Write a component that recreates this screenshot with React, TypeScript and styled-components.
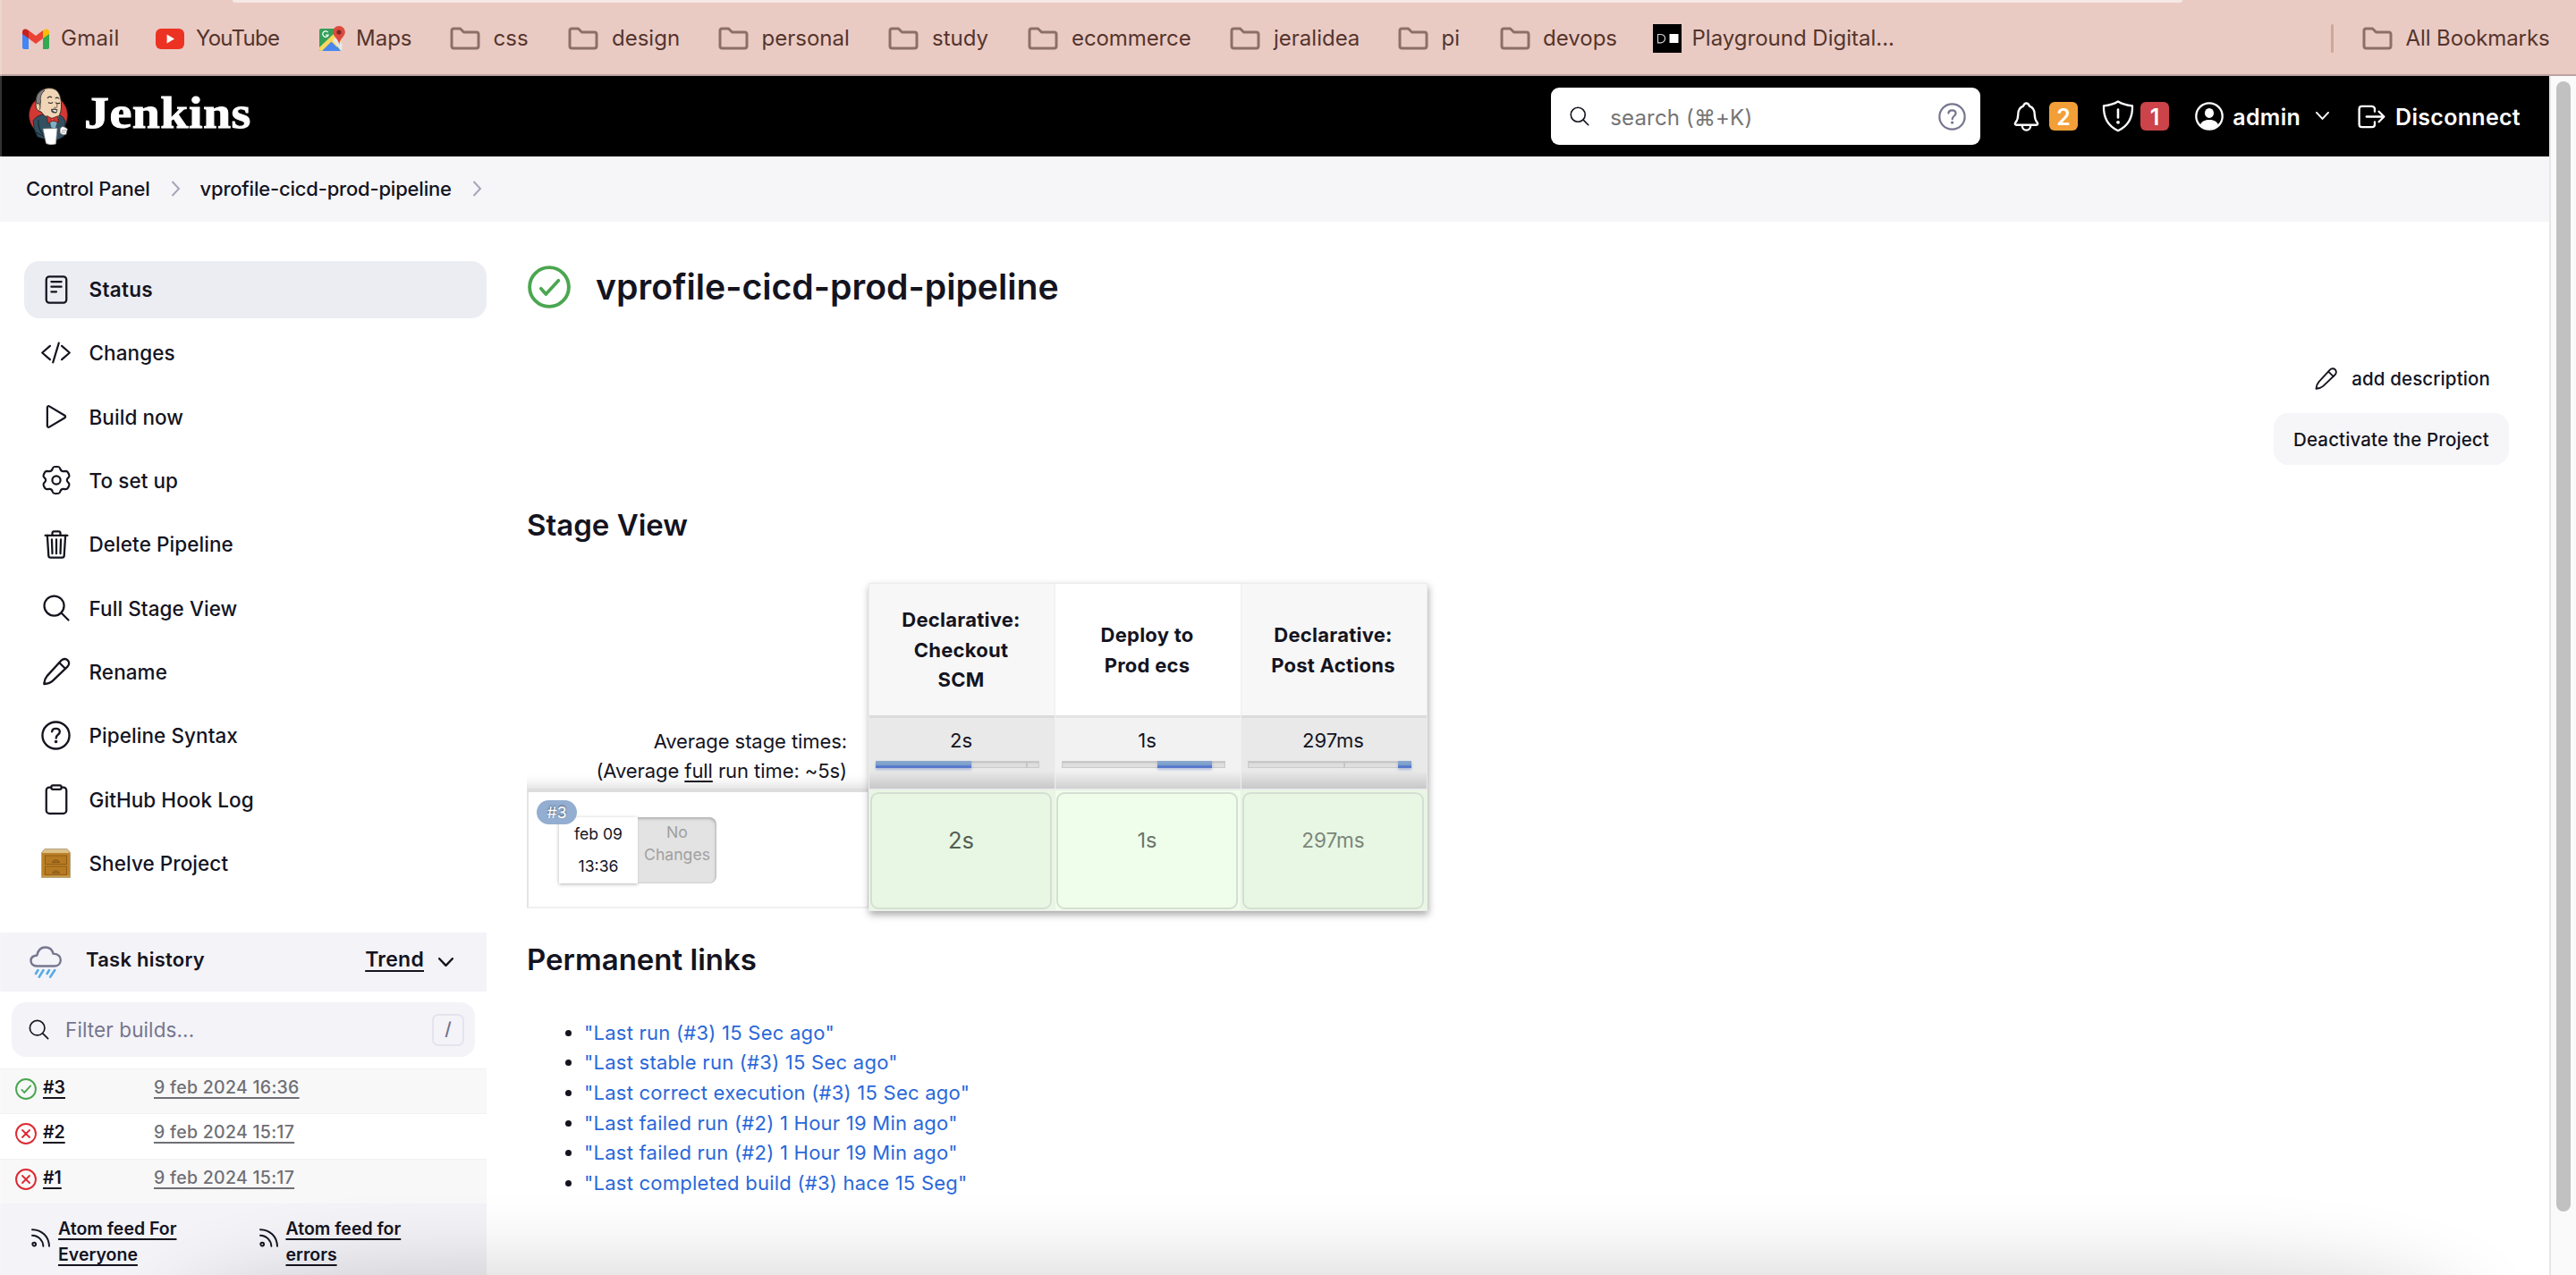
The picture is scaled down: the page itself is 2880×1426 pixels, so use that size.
import React from "react";
import styled, { createGlobalStyle, css } from "styled-components";
import {
  IoReaderOutline,
  IoCodeSlashOutline,
  IoPlayOutline,
  IoTrashOutline,
  IoSearchOutline,
  IoClipboardOutline,
  IoNotificationsOutline,
  IoLogOutOutline,
} from "react-icons/io5";

const INK = "#14141f";

const GlobalStyle = createGlobalStyle`
  * { box-sizing: border-box; }
  body {
    margin: 0;
    background: #fff;
    color: ${INK};
    font-family: Inter, "Liberation Sans", sans-serif;
    font-size: 22px;
    overflow: hidden;
  }
  svg { display: block; flex: none; }
  a { color: inherit; text-decoration: none; }
`;

const Window = styled.div`
  position: relative;
  display: flex;
  flex-direction: column;
  width: 2880px;
  height: 1426px;
  overflow: hidden;
`;

const WindowShade = styled.div`
  position: absolute;
  inset: 0;
  overflow: hidden;
  pointer-events: none;
  box-shadow: inset 2px 0 rgba(255, 255, 255, 0.2);

  &::after {
    content: "";
    position: absolute;
    left: 190px;
    right: 120px;
    bottom: -66px;
    height: 60px;
    border-radius: 320px 320px 0 0 / 60px 60px 0 0;
    box-shadow: 0 0 90px 10px rgba(0, 0, 0, 0.19);
  }
`;

/* ---------- Bookmarks bar ---------- */

const BookmarksBar = styled.nav`
  display: flex;
  flex-direction: column;
  height: 85px;
  background: #eacbc4;
  border-bottom: 2px solid #bba39e;
  color: #55352d;
`;

const OmniboxEdge = styled.div`
  height: 3px;
  width: 2180px;
  margin-left: 260px;
  background: #f6e8e5;
  border-radius: 0 0 10px 10px;
`;

const BookmarksRow = styled.div`
  flex: 1;
  display: flex;
  align-items: center;
  padding-left: 25px;
`;

const Bookmark = styled.a<{ $width: number; $gap: number; $tracking?: number }>`
  display: flex;
  align-items: center;
  width: ${(p) => p.$width}px;
  gap: ${(p) => p.$gap}px;
  font-size: 24px;
  letter-spacing: ${(p) => p.$tracking ?? 0}px;
  line-height: 32px;
  white-space: nowrap;
`;

const BarDivider = styled.span`
  width: 3px;
  height: 32px;
  margin-left: auto;
  margin-right: 32px;
  border-radius: 2px;
  background: #cfa697;
`;

/* ---------- Page frame ---------- */

const Viewport = styled.div`
  flex: 1;
  display: flex;
  min-height: 0;
`;

const Site = styled.div`
  width: 2850px;
  display: flex;
  flex-direction: column;
`;

const ScrollTrack = styled.div`
  width: 30px;
  padding: 6px 6px 0 6px;
  background: #fafafa;
  border-left: 2px solid #e7e7e7;
`;

const ScrollThumb = styled.div`
  width: 16px;
  height: 1264px;
  border-radius: 8px;
  background: #c1c1c1;
`;

/* ---------- Header ---------- */

const Header = styled.header`
  height: 90px;
  flex: none;
  display: flex;
  align-items: center;
  padding: 0 32px;
  background: #000;
  color: #fff;
`;

const Brand = styled.a`
  display: flex;
  align-items: center;
  gap: 17px;
`;

const BrandName = styled.span`
  font: 700 50px/60px "Liberation Serif", serif;
  width: 190px;
  letter-spacing: 0.4px;
  transform: scaleX(1.12);
  transform-origin: left center;
  -webkit-text-stroke: 0.9px #fff;
  margin-top: -8px;
`;

const SearchBox = styled.div`
  display: flex;
  align-items: center;
  width: 480px;
  height: 64px;
  margin-left: auto;
  padding: 0 16px 0 19px;
  border-radius: 9px;
  background: #fff;
  color: ${INK};
`;

const SearchHint = styled.span`
  flex: 1;
  margin: 2px 0 0 21px;
  font-size: 24px;
  letter-spacing: 0.15px;
  color: #757575;
`;

const HeaderAction = styled.a<{ $ml: number; $gap: number }>`
  display: flex;
  align-items: center;
  margin-left: ${(p) => p.$ml}px;
  gap: ${(p) => p.$gap}px;
  font-size: 25px;
  font-weight: 600;
  letter-spacing: 0.3px;
  white-space: nowrap;
`;

const HeaderLabel = styled.span`
  margin-top: 2px;
`;

const MenuArrow = styled.span`
  margin-left: 7px;
`;

const Badge = styled.span<{ $color: string }>`
  width: 32px;
  height: 32px;
  border-radius: 6px;
  background: ${(p) => p.$color};
  font-size: 25px;
  line-height: 34px;
  text-align: center;
`;

/* ---------- Breadcrumbs ---------- */

const Breadcrumbs = styled.nav`
  height: 73px;
  flex: none;
  display: flex;
  align-items: center;
  padding: 0 0 1px 29px;
  background: #f6f6f8;
  font-weight: 500;
  letter-spacing: -0.2px;
`;

const CrumbArrow = styled.svg`
  width: 11px;
  height: 18px;
  margin: 0 22px 0 23px;
  fill: none;
  stroke: #a6a6b8;
  stroke-width: 2;
`;

const Body = styled.div`
  flex: 1;
  display: flex;
  min-height: 0;
`;

/* ---------- Sidebar ---------- */

const Sidebar = styled.aside`
  width: 544px;
  flex: none;
  display: flex;
  flex-direction: column;
`;

const Tasks = styled.nav`
  height: 795px;
  flex: none;
  display: flex;
  flex-direction: column;
  gap: 7.33px;
  padding: 44px 0 0 27px;
`;

const Task = styled.a<{ $active?: boolean }>`
  display: flex;
  align-items: center;
  height: 64px;
  gap: 19px;
  padding: 0 0 1px 17.5px;
  border-radius: 17px;
  font-size: 22.5px;
  font-weight: 500;
  letter-spacing: 0.07px;
  ${(p) =>
    p.$active &&
    css`
      background: #ecedf3;
      font-weight: 600;
      letter-spacing: 0.3px;
    `}
`;

const TaskIcon = styled.span`
  display: flex;
  justify-content: center;
  width: 36px;
`;

const HistoryHeader = styled.div`
  display: flex;
  align-items: center;
  height: 66px;
  padding: 0 37px 0 33px;
  background: #f3f3f8;
  font-weight: 600;
  letter-spacing: 0.25px;
`;

const HistoryTitle = styled.span`
  flex: 1;
  margin-left: 26px;
  margin-top: -6px;
`;

const Trend = styled.a`
  margin: -6px 16px 0 0;
  font-size: 23px;
  text-decoration: underline;
  text-decoration-thickness: 2px;
  text-underline-offset: 4px;
`;

const Filter = styled.div`
  display: flex;
  align-items: center;
  height: 61px;
  margin: 12px 13px 13px;
  padding: 0 12px 0 17px;
  border-radius: 16px;
  background: #f3f3f8;
`;

const FilterHint = styled.span`
  flex: 1;
  margin-left: 16px;
  font-size: 22.5px;
  letter-spacing: 0.1px;
  color: #76768f;
`;

const Key = styled.kbd`
  width: 36px;
  height: 36px;
  border: 2px solid #e4e4ee;
  border-radius: 7px;
  font: 500 20px/31px Inter, sans-serif;
  text-align: center;
  color: #6f6f88;
`;

const BuildRow = styled.div<{ $striped?: boolean }>`
  display: flex;
  align-items: flex-start;
  height: 50.4px;
  padding-left: 17px;
  border-top: 1px solid #f1f1f3;
  background: ${(p) => (p.$striped ? "#f8f8f8" : "#fff")};
`;

const BuildIcon = styled.span`
  margin-top: 10px;
`;

const BuildNumber = styled.a`
  width: 124px;
  margin: 8px 0 0 7px;
  font-size: 19.5px;
  font-weight: 600;
  line-height: 24px;
  text-decoration: underline;
  text-decoration-thickness: 1.5px;
  text-underline-offset: 4px;
`;

const BuildDate = styled(BuildNumber)`
  width: auto;
  margin-left: 0;
  font-weight: 500;
  letter-spacing: 0.28px;
  color: #6f6f76;
`;

const Feeds = styled.div`
  flex: 1;
  display: flex;
  padding: 14px 0 0 35px;
  background: #f3f3f8;
`;

const Feed = styled.a`
  display: flex;
  align-items: flex-start;
  gap: 9px;
  width: 256px;

  svg {
    margin-top: 14px;
  }
`;

const FeedLabel = styled.span`
  width: 150px;
  font-size: 19.5px;
  font-weight: 600;
  line-height: 29px;
  text-decoration: underline;
  text-decoration-thickness: 1.5px;
  text-underline-offset: 4px;
`;

/* ---------- Main ---------- */

const Main = styled.main`
  flex: 1;
  display: flex;
  flex-direction: column;
  padding: 49px 45px 0;
`;

const TitleRow = styled.div`
  display: flex;
  align-items: center;
  gap: 28px;
  height: 48px;
  padding-left: 1px;
`;

const Title = styled.h1`
  margin: 0;
  font-size: 39.2px;
  font-weight: 600;
  line-height: 48px;
`;

const Actions = styled.div`
  display: flex;
  flex-direction: column;
  align-items: flex-end;
  gap: 24px;
  margin-top: 63px;
  font-size: 20.5px;
  font-weight: 500;
  letter-spacing: 0.12px;
`;

const AddDescription = styled.a`
  display: flex;
  align-items: center;
  gap: 14px;
  height: 30px;
  margin-right: 21px;
`;

const SoftButton = styled.button`
  height: 57.5px;
  width: 263px;
  padding: 2px 0 0;
  border: 0;
  border-radius: 16px;
  background: #f6f6f9;
  color: inherit;
  font: inherit;
  letter-spacing: inherit;
`;

const Heading = styled.h2<{ $mt: number }>`
  margin: ${(p) => p.$mt}px 0 0;
  font-size: 33px;
  font-weight: 600;
  line-height: 40px;
`;

/* ---------- Stage view ---------- */

const StageView = styled.section`
  display: flex;
  height: 367px;
  margin-top: 45px;
`;

const RunsColumn = styled.div`
  width: 382px;
  padding-top: 151px;
`;

const AverageLabels = styled.div`
  height: 79px;
  padding: 10px 24px 0 0;
  font-size: 22px;
  line-height: 33.4px;
  text-align: right;
  letter-spacing: -0.08px;
  background: linear-gradient(to top, #e6e6e6, #f8f8f8 9px, #fff 16px);

  u {
    text-decoration-thickness: 2px;
    text-underline-offset: 3px;
  }
`;

const Run = styled.div`
  height: 134px;
  padding: 9px 0 0 9px;
  border: solid #e4e4e4;
  border-width: 4px 1px 2px 2px;
  border-top-color: #dedede;
  border-bottom-color: #f0f0f0;
`;

const RunBadge = styled.span`
  position: relative;
  z-index: 1;
  display: block;
  width: 45px;
  height: 27px;
  border-radius: 14px;
  background: #93aed0;
  color: #fff;
  font-size: 17.5px;
  line-height: 27px;
  text-align: center;
  text-shadow: 0 -1px 2px rgba(0, 0, 0, 0.5);
`;

const RunCard = styled.div`
  display: flex;
  height: 74px;
  width: 176px;
  margin: -8px 0 0 25px;
  font-size: 17.6px;
  text-align: center;
`;

const RunDate = styled.div`
  width: 88px;
  padding-top: 1px;
  line-height: 36.3px;
  background: #fff;
  box-shadow: 0 1px 4px rgba(0, 0, 0, 0.3);
`;

const RunChanges = styled.div`
  width: 88px;
  padding-top: 4px;
  line-height: 25px;
  color: #a0a0a0;
  background: #e3e3e3;
  border-radius: 0 8px 8px 0;
  box-shadow: inset -1px 2px 3px rgba(0, 0, 0, 0.22), inset 0 -1px 1px rgba(0, 0, 0, 0.08);
`;

const StageTable = styled.div`
  display: flex;
  width: 625px;
  border: 1px solid #ececec;
  box-shadow: 1px 4px 8px rgba(0, 0, 0, 0.34);
`;

const StageColumn = styled.div<{ $shaded?: boolean }>`
  flex: 1;
  display: flex;
  flex-direction: column;
  background: ${(p) => (p.$shaded ? "#f7f7f7" : "#fff")};
  border-right: 1px solid #efefef;

  &:last-child {
    border-right: 0;
  }
`;

const StageName = styled.div`
  display: flex;
  align-items: center;
  justify-content: center;
  height: 150px;
  padding: 3px 27px 0 25px;
  border-bottom: 3px solid rgba(0, 0, 0, 0.11);
  font-weight: 700;
  line-height: 33.6px;
  letter-spacing: 0.25px;
  text-align: center;
`;

const StageAverage = styled.div<{ $shaded?: boolean }>`
  height: 79px;
  padding: 10px 17px 0 7px;
  line-height: 30px;
  text-align: center;
  background: ${(p) => (p.$shaded ? "#e9e9e9" : "#f2f2f2")}
    linear-gradient(to top, rgba(0, 0, 0, 0.14), transparent 20px);

  span {
    margin-left: 8px;
  }
`;

const Meter = styled.div`
  display: flex;
  width: 183px;
  height: 8px;
  margin-top: 8px;
  background: #dedede;
  box-shadow: inset 0 0 0 1px #cbcbcb, inset 0 2px 2px rgba(0, 0, 0, 0.16);
`;

const MeterFill = styled.i`
  background: linear-gradient(#8aa8cd, #7ba0cc 55%, #5273c9 75%, #5b7ccd);
  box-shadow: 0 2px 3px rgba(70, 100, 180, 0.35);
`;

const MeterTick = styled.i`
  width: 2px;
  background: #c6c6c6;
`;

const StageResult = styled.div<{ $shaded?: boolean; $color: string; $size: number }>`
  flex: 1;
  display: flex;
  padding: 2px 3px 1px 1px;
  background: ${(p) => (p.$shaded ? "#e8f7e3" : "#effeea")};
  border-top: 2px solid #ececec;

  div {
    flex: 1;
    padding-top: 32px;
    border: 2px solid #d5ded3;
    border-radius: 9px;
    color: ${(p) => p.$color};
    font-size: ${(p) => p.$size}px;
    line-height: 40px;
    text-align: center;
  }
`;

const LinkList = styled.ul`
  margin: 46px 0 0;
  padding-left: 64px;
  line-height: 33.7px;
  letter-spacing: 0.25px;

  li {
    height: 33.7px;
  }

  a {
    color: #2a68d9;
  }
`;

/* ---------- Drawings ---------- */

const FolderIcon = () => (
  <svg width="34" height="26" viewBox="0 0 34 26" fill="none" stroke="#8b7068" strokeWidth="3" strokeLinejoin="round">
    <path d="M2 4.5Q2 2 4.5 2H11.5L15.5 6H29.5Q32 6 32 8.5V21.5Q32 24 29.5 24H4.5Q2 24 2 21.5Z" />
  </svg>
);

const GmailIcon = () => (
  <svg width="30" height="23" viewBox="0 0 30 23">
    <path d="M0 4.5L7 9.5V23H2Q0 23 0 21Z" fill="#4285f4" />
    <path d="M30 4.5L23 9.5V23H28Q30 23 30 21Z" fill="#34a853" />
    <path d="M23 2L26 0.5Q30 0 30 4V6L23 11Z" fill="#fbbc04" />
    <path d="M7 2L4 0.5Q0 0 0 4V6L7 11Z" fill="#c5221f" />
    <path d="M7 2L15 8L23 2V11L15 17L7 11Z" fill="#ea4335" />
  </svg>
);

const YouTubeIcon = () => (
  <svg width="32" height="23" viewBox="0 0 32 23">
    <rect width="32" height="23" rx="6" fill="#ec3323" />
    <path d="M12.6 6.6L21 11.5L12.6 16.4Z" fill="#fff" />
  </svg>
);

const MapsIcon = () => (
  <svg width="29" height="29" viewBox="0 0 29 29">
    <path d="M2 3H25V28H2Q0 28 0 26V5Q0 3 2 3Z" fill="#34a059" />
    <path d="M0 24L17 8L25 14V21L11 28H2Q0 28 0 26Z" fill="#fbd75b" />
    <path d="M3 28L13.5 17.5L24 28Z" fill="#4a86ee" />
    <path d="M15 16L19 12L25.5 20V26Q25.5 28 24 28Z" fill="#e6e6e6" />
    <path d="M22 0A6.8 6.8 0 0 1 28.8 7C28.8 12 22.8 14 22.2 21C21.4 14 15.2 12 15.2 7A6.8 6.8 0 0 1 22 0Z" fill="#dd4b3e" />
    <circle cx="22" cy="7" r="2.6" fill="#7d2620" />
    <path d="M9.6 7.2A3.2 3.2 0 1 0 10 10.2H7.2" fill="none" stroke="#fff" strokeWidth="1.3" />
  </svg>
);

const PlaygroundIcon = () => (
  <svg width="32" height="32" viewBox="0 0 32 32">
    <rect width="32" height="32" fill="#000" />
    <path d="M5.5 11.5H9Q13.5 12 13.5 16T9 20.8H5.5Z" fill="none" stroke="#cfcfcf" strokeWidth="1.2" />
    <rect x="18.5" y="11" width="10" height="10" fill="#fff" />
  </svg>
);

const ButlerLogo = () => (
  <svg width="45" height="64" viewBox="0 0 45 64">
    <ellipse cx="22" cy="31" rx="21.5" ry="22.5" fill="#d33833" stroke="#5d1d1b" strokeWidth="0.8" />
    <path d="M5 37Q10 30 19 30L34 30Q40 33 41 38L40 54Q32 60 24 59L10 55Q5 46 5 37Z" fill="#335061" stroke="#1a2a34" strokeWidth="0.9" />
    <path d="M20 30L29 50L34 30Z" fill="#f5f5f5" />
    <path d="M23 36H33L30 46L25 45Z" fill="#81b0c4" stroke="#1a2a34" strokeWidth="0.6" />
    <path d="M11 36Q10 46 16 52M8 50L18 55" fill="none" stroke="#172730" strokeWidth="1.1" />
    <path d="M8 16Q8 5 17 1.5Q28 -1.5 33 5Q37 11 36.5 22Q36 33 29 35Q19 35 14 27Q8 26 8 19Z" fill="#f0d6b7" stroke="#2c2420" strokeWidth="0.9" />
    <path d="M8.5 17Q7 7 16 2L18 3Q12 8 13.5 16L12.5 22Q11 17 8.5 17Z" fill="#7d8083" stroke="#2c2420" strokeWidth="0.7" />
    <path d="M9 18Q13 16.5 13 22Q13 25 11.5 25.5" fill="#e8c5a0" stroke="#2c2420" strokeWidth="0.8" />
    <path d="M21 12Q23 9 26 11M30 12Q32 10 34 12.5" fill="none" stroke="#3a2e28" strokeWidth="1.2" />
    <path d="M22 16.5Q24.5 18.5 27 16.5M31 17Q33 18.5 35 17" fill="none" stroke="#2c2420" strokeWidth="1.2" />
    <path d="M29.5 16Q33.5 20 31 22.5L28.5 22.2" fill="none" stroke="#6b4a38" strokeWidth="0.9" />
    <path d="M25 24Q29 22.6 32.5 24.5L31.5 28Q28 29.5 25.5 27Z" fill="#47423f" />
    <path d="M26.5 25.2Q29 24.6 31.3 25.6L31 26.8Q28.5 27.4 26.5 25.2Z" fill="#fff" />
    <path d="M20.5 31.5L26 34.5L32.5 31.8L33.5 39L27 37L21.5 40Z" fill="#d33833" stroke="#5d1d1b" strokeWidth="0.8" />
    <circle cx="26.7" cy="35.7" r="1.8" fill="#ef4a44" stroke="#5d1d1b" strokeWidth="0.6" />
    <path d="M16 46L32 45.5L31 56L30.5 63Q24 65 19.5 62.5Z" fill="#fff" stroke="#8a8a8a" strokeWidth="0.7" />
    <path d="M35 46Q37 42 41 44.5L43.5 46L42 52.5Q38 54 35 51Z" fill="#fff" stroke="#4c4c4c" strokeWidth="0.8" />
    <path d="M37 48L42 47.6M36.6 50.2L41 50" stroke="#777" strokeWidth="0.7" />
  </svg>
);

const HelpIcon = ({ size, color }: { size: number; color: string }) => (
  <svg width={size} height={size} viewBox="0 0 32 32" fill="none" stroke={color} strokeWidth="2.3" strokeLinecap="round">
    <circle cx="16" cy="16" r="14.6" />
    <path d="M11.8 11.9C12 9.6 13.8 8.6 16 8.6C18.4 8.6 20.2 10 20.2 12.1C20.2 15.2 16.2 15.3 16.2 18.8" />
    <circle cx="16.1" cy="22.8" r="1.7" fill={color} stroke="none" />
  </svg>
);

const GearIcon = () => (
  <svg width="36" height="36" viewBox="0 0 36 36" fill="none" stroke={INK} strokeWidth="2.2" strokeLinejoin="round">
    <path d="M13.8 5Q14.4 3 16.2 3H19.8Q21.6 3 22.2 5Q22.8 7.8 25.2 8.2Q26 8.3 28.2 7.9Q30 7.8 31 9.4L32.2 11.8Q33 13.8 31.5 15.2Q29.8 16.6 29.8 18Q29.8 19.4 31.5 20.8Q33 22.2 32.2 24.2L31 26.6Q30 28.2 28.2 28.1Q26 27.7 25.2 27.8Q22.8 28.2 22.2 31Q21.6 33 19.8 33H16.2Q14.4 33 13.8 31Q13.2 28.2 10.8 27.8Q10 27.7 7.8 28.1Q6 28.2 5 26.6L3.8 24.2Q3 22.2 4.5 20.8Q6.2 19.4 6.2 18Q6.2 16.6 4.5 15.2Q3 13.8 3.8 11.8L5 9.4Q6 7.8 7.8 7.9Q10 8.3 10.8 8.2Q13.2 7.8 13.8 5Z" />
    <circle cx="18" cy="18" r="4.6" />
  </svg>
);

const PencilIcon = ({ size }: { size: number }) => (
  <svg width={size} height={size} viewBox="0 0 36 36" fill="none" stroke={INK} strokeWidth="2.3" strokeLinecap="round" strokeLinejoin="round">
    <path d="M4.3 32C4.6 27.6 5.4 25.6 8 22.6L23.4 5.8C25.4 3.6 28.6 3.4 30.6 5.3C32.7 7.3 32.6 10.6 30.4 12.7L14 28.4C11.2 31 8.8 31.6 4.3 32Z" />
    <path d="M21.4 8.2L28 14.8" />
  </svg>
);

const ChevronIcon = ({ width, stroke }: { width: number; stroke: number }) => (
  <svg width={width} height={width * 0.62} viewBox={`0 0 ${width} ${width * 0.62}`} fill="none" stroke="currentColor" strokeWidth={stroke} strokeLinecap="round" strokeLinejoin="round">
    <path d={`M${stroke / 2} ${stroke / 2}L${width / 2} ${width * 0.62 - stroke / 2 - 0.4}L${width - stroke / 2} ${stroke / 2}`} />
  </svg>
);

const ShieldIcon = () => (
  <svg width="36" height="36" viewBox="0 0 36 36" fill="none" stroke="#fff" strokeWidth="2.3" strokeLinecap="round" strokeLinejoin="round">
    <path d="M18 1.5C14 4 8.5 5.8 2 6.3C1.6 18 5.5 28.5 18 34.2C30.5 28.5 34.4 18 34 6.3C27.5 5.8 22 4 18 1.5Z" />
    <path d="M18 10.5V19.5" strokeWidth="2.6" />
    <circle cx="18" cy="24.8" r="1.9" fill="#fff" stroke="none" />
  </svg>
);

const PersonIcon = () => (
  <svg width="32" height="32" viewBox="0 0 32 32">
    <circle cx="16" cy="16" r="14.7" fill="none" stroke="#fff" strokeWidth="2.3" />
    <ellipse cx="16" cy="12.4" rx="5" ry="5.5" fill="#fff" />
    <path d="M6 25.5C7.5 21.5 11.5 20 16 20C20.5 20 24.5 21.5 26 25.5C23.5 28.6 20 30 16 30C12 30 8.5 28.6 6 25.5Z" fill="#fff" />
  </svg>
);

const StatusIcon = ({ ok, size }: { ok: boolean; size: number }) => (
  <svg
    width={size}
    height={size}
    viewBox="0 0 48 48"
    fill="none"
    stroke={ok ? "#4ba650" : "#dc2a33"}
    strokeLinecap="round"
    strokeLinejoin="round"
  >
    <circle cx="24" cy="24" r="21.9" strokeWidth="3.9" />
    <path d={ok ? "M14.8 25.8L20.3 32L34.4 16.8" : "M16 16L32 32M32 16L16 32"} strokeWidth="3.7" />
  </svg>
);

const RainIcon = () => (
  <svg width="37" height="37" viewBox="0 0 37 37" fill="none" strokeWidth="2.4" strokeLinecap="round" strokeLinejoin="round">
    <path
      stroke="#76768f"
      d="M8 22.5C3.7 22.5 1.5 19.6 1.5 16.6C1.5 13.2 4 10.8 8.3 10.5C9.5 4.5 13 1.5 17.8 1.5C22.5 1.5 25.5 4.5 26.5 8.6C32 9 34.8 12 34.8 15.7C34.8 19.6 31.8 22.5 27.5 22.5Z"
    />
    <path stroke="#55aae6" strokeWidth="2.6" d="M9.5 27L7 31M15.5 27L10.8 34.6M22 27L19.6 31M28.3 27L23.2 34.6" />
  </svg>
);

const CabinetIcon = () => (
  <svg width="33" height="33" viewBox="0 0 33 33">
    <path d="M4 0.5H29L32.5 4.5V32.5H0.5V4.5Z" fill="#bd8227" stroke="#b5a583" strokeWidth="1" />
    <path d="M4 1H29L32 5H1Z" fill="#ddc08a" />
    <path d="M1 30H32V32H1Z" fill="#c79a45" />
    <g fill="#b67a22" stroke="#8f5d17" strokeWidth="1">
      <rect x="4.5" y="8" width="24" height="9.5" />
      <rect x="4.5" y="20" width="24" height="9.5" />
    </g>
    <g fill="#a56d1e" stroke="#85571a" strokeWidth="1">
      <path d="M12.5 15.5Q13 12.8 16.5 12.8T20.5 15.5Z" />
      <path d="M12.5 27.5Q13 24.8 16.5 24.8T20.5 27.5Z" />
    </g>
  </svg>
);

const RssIcon = () => (
  <svg width="21" height="21" viewBox="0 0 21 21" fill="none" stroke={INK} strokeWidth="1.9" strokeLinecap="round">
    <circle cx="3.2" cy="17.6" r="1.9" />
    <path d="M1 7.8C8 8 13 13 13.4 19.8M1 1.2C12 1.4 19.6 9 20 19.8" />
  </svg>
);

const Crumb = () => (
  <CrumbArrow viewBox="0 0 11 18">
    <path d="M1.5 1L9 9L1.5 17" />
  </CrumbArrow>
);

/* ---------- Data ---------- */

const bookmarks = [
  { label: "Gmail", icon: <GmailIcon />, width: 149, gap: 13, tracking: 0.3 },
  { label: "YouTube", icon: <YouTubeIcon />, width: 183, gap: 13, tracking: -0.75 },
  { label: "Maps", icon: <MapsIcon />, width: 145.5, gap: 12, tracking: 0 },
  { label: "css", icon: <FolderIcon />, width: 132.5, gap: 15, tracking: 0 },
  { label: "design", icon: <FolderIcon />, width: 168, gap: 15, tracking: 0 },
  { label: "personal", icon: <FolderIcon />, width: 190, gap: 14.5, tracking: 0 },
  { label: "study", icon: <FolderIcon />, width: 156, gap: 15, tracking: 0 },
  { label: "ecommerce", icon: <FolderIcon />, width: 226, gap: 15, tracking: -0.1 },
  { label: "jeralidea", icon: <FolderIcon />, width: 188, gap: 15, tracking: 0 },
  { label: "pi", icon: <FolderIcon />, width: 114, gap: 14.5, tracking: 0 },
  { label: "devops", icon: <FolderIcon />, width: 171, gap: 14, tracking: 0 },
  { label: "Playground Digital...", icon: <PlaygroundIcon />, width: 290, gap: 11.5, tracking: 0 },
];

const tasks = [
  { label: "Status", icon: <IoReaderOutline size={36} /> },
  { label: "Changes", icon: <IoCodeSlashOutline size={35} /> },
  { label: "Build now", icon: <IoPlayOutline size={36} /> },
  { label: "To set up", icon: <GearIcon /> },
  { label: "Delete Pipeline", icon: <IoTrashOutline size={36} /> },
  { label: "Full Stage View", icon: <IoSearchOutline size={36} /> },
  { label: "Rename", icon: <PencilIcon size={36} /> },
  { label: "Pipeline Syntax", icon: <HelpIcon size={33} color={INK} /> },
  { label: "GitHub Hook Log", icon: <IoClipboardOutline size={36} /> },
  { label: "Shelve Project", icon: <CabinetIcon /> },
];

const builds = [
  { number: "#3", date: "9 feb 2024 16:36", ok: true },
  { number: "#2", date: "9 feb 2024 15:17", ok: false },
  { number: "#1", date: "9 feb 2024 15:17", ok: false },
];

const stages = [
  { name: "Declarative: Checkout SCM", time: "2s", fill: [0, 107], tick: 168, color: "#555e55", size: 25.5 },
  { name: "Deploy to Prod ecs", time: "1s", fill: [107, 61], tick: null, color: "#6c756b", size: 23.5 },
  { name: "Declarative: Post Actions", time: "297ms", fill: [168, 15], tick: 107, color: "#7b867a", size: 22.5 },
];

const links = [
  '"Last run (#3) 15 Sec ago"',
  '"Last stable run (#3) 15 Sec ago"',
  '"Last correct execution (#3) 15 Sec ago"',
  '"Last failed run (#2) 1 Hour 19 Min ago"',
  '"Last failed run (#2) 1 Hour 19 Min ago"',
  '"Last completed build (#3) hace 15 Seg"',
];

/* ---------- Composition ---------- */

const StageMeter = ({ fill, tick }: { fill: number[]; tick: number | null }) => {
  const [start, width] = fill;
  if (tick !== null && tick < start) {
    return (
      <Meter>
        <MeterTick style={{ marginLeft: tick, marginRight: start - tick - 2 }} />
        <MeterFill style={{ width }} />
      </Meter>
    );
  }
  return (
    <Meter>
      <MeterFill style={{ width, marginLeft: start }} />
      {tick !== null && <MeterTick style={{ marginLeft: tick - start - width }} />}
    </Meter>
  );
};

export default function App() {
  return (
    <Window>
      <GlobalStyle />
      <BookmarksBar>
        <OmniboxEdge />
        <BookmarksRow>
          {bookmarks.map((b) => (
            <Bookmark key={b.label} $width={b.width} $gap={b.gap} $tracking={b.tracking}>
              {b.icon}
              {b.label}
            </Bookmark>
          ))}
          <BarDivider />
          <Bookmark $width={239} $gap={14.5} $tracking={-0.1}>
            <FolderIcon />
            All Bookmarks
          </Bookmark>
        </BookmarksRow>
      </BookmarksBar>

      <Viewport>
        <Site>
          <Header>
            <Brand>
              <ButlerLogo />
              <BrandName>Jenkins</BrandName>
            </Brand>
            <SearchBox>
              <IoSearchOutline size={26} />
              <SearchHint>search (⌘+K)</SearchHint>
              <HelpIcon size={31} color="#76768f" />
            </SearchBox>
            <HeaderAction $ml={33} $gap={7}>
              <IoNotificationsOutline size={37} />
              <Badge $color="#f39f38">2</Badge>
            </HeaderAction>
            <HeaderAction $ml={27} $gap={7}>
              <ShieldIcon />
              <Badge $color="#cc4349">1</Badge>
            </HeaderAction>
            <HeaderAction $ml={29} $gap={10}>
              <PersonIcon />
              <HeaderLabel>admin</HeaderLabel>
              <MenuArrow>
                <ChevronIcon width={15} stroke={1.9} />
              </MenuArrow>
            </HeaderAction>
            <HeaderAction $ml={29} $gap={8}>
              <IoLogOutOutline size={37} />
              <HeaderLabel>Disconnect</HeaderLabel>
            </HeaderAction>
          </Header>

          <Breadcrumbs>
            <span>Control Panel</span>
            <Crumb />
            <span>vprofile-cicd-prod-pipeline</span>
            <Crumb />
          </Breadcrumbs>

          <Body>
            <Sidebar>
              <Tasks>
                {tasks.map((t, i) => (
                  <Task key={t.label} $active={i === 0}>
                    <TaskIcon>{t.icon}</TaskIcon>
                    {t.label}
                  </Task>
                ))}
              </Tasks>
              <HistoryHeader>
                <RainIcon />
                <HistoryTitle>Task history</HistoryTitle>
                <Trend>Trend</Trend>
                <ChevronIcon width={17} stroke={2.4} />
              </HistoryHeader>
              <Filter>
                <IoSearchOutline size={27} />
                <FilterHint>Filter builds...</FilterHint>
                <Key>/</Key>
              </Filter>
              {builds.map((b, i) => (
                <BuildRow key={b.number} $striped={i % 2 === 0}>
                  <BuildIcon>
                    <StatusIcon ok={b.ok} size={24} />
                  </BuildIcon>
                  <BuildNumber>{b.number}</BuildNumber>
                  <BuildDate>{b.date}</BuildDate>
                </BuildRow>
              ))}
              <Feeds>
                <Feed>
                  <RssIcon />
                  <FeedLabel>Atom feed For Everyone</FeedLabel>
                </Feed>
                <Feed>
                  <RssIcon />
                  <FeedLabel>Atom feed for errors</FeedLabel>
                </Feed>
              </Feeds>
            </Sidebar>

            <Main>
              <TitleRow>
                <StatusIcon ok size={48} />
                <Title>vprofile-cicd-prod-pipeline</Title>
              </TitleRow>
              <Actions>
                <AddDescription>
                  <PencilIcon size={29} />
                  add description
                </AddDescription>
                <SoftButton>Deactivate the Project</SoftButton>
              </Actions>

              <Heading $mt={47}>Stage View</Heading>
              <StageView>
                <RunsColumn>
                  <AverageLabels>
                    Average stage times:
                    <br />
                    (Average <u>full</u> run time: ~5s)
                  </AverageLabels>
                  <Run>
                    <RunBadge>#3</RunBadge>
                    <RunCard>
                      <RunDate>
                        feb 09
                        <br />
                        13:36
                      </RunDate>
                      <RunChanges>
                        No
                        <br />
                        Changes
                      </RunChanges>
                    </RunCard>
                  </Run>
                </RunsColumn>
                <StageTable>
                  {stages.map((s, i) => (
                    <StageColumn key={s.name} $shaded={i % 2 === 0}>
                      <StageName>{s.name}</StageName>
                      <StageAverage $shaded={i % 2 === 0}>
                        <span>{s.time}</span>
                        <StageMeter fill={s.fill} tick={s.tick} />
                      </StageAverage>
                      <StageResult $shaded={i % 2 === 0} $color={s.color} $size={s.size}>
                        <div>{s.time}</div>
                      </StageResult>
                    </StageColumn>
                  ))}
                </StageTable>
              </StageView>

              <Heading $mt={34}>Permanent links</Heading>
              <LinkList>
                {links.map((l, i) => (
                  <li key={i}>
                    <a>{l}</a>
                  </li>
                ))}
              </LinkList>
            </Main>
          </Body>
        </Site>
        <ScrollTrack>
          <ScrollThumb />
        </ScrollTrack>
      </Viewport>
      <WindowShade />
    </Window>
  );
}
